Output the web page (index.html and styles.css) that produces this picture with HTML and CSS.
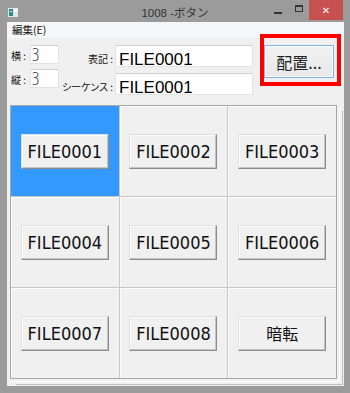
FILE: index.html
```html
<!DOCTYPE html>
<html lang="ja">
<head>
<meta charset="utf-8">
<title>1008 -ボタン</title>
<link rel="stylesheet" href="styles.css">
</head>
<body>
<div class="window">
  <div class="titlebar">
    <div class="app-icon">
      <svg width="10" height="9" viewBox="0 0 10 9"><rect x="0" y="0" width="10" height="9" fill="#dfe8e8"/><rect x="1" y="1" width="4" height="7" fill="#2f8c8c"/><rect x="2" y="3" width="2" height="1" fill="#e8f4f4"/><rect x="6" y="1" width="3" height="3" fill="#ffffff"/></svg>
    </div>
    <div class="title">1008 -ボタン</div>
    <div class="controls">
      <span class="min"></span>
      <span class="max"></span>
      <span class="close">✕</span>
    </div>
  </div>
  <div class="client">
    <div class="menubar"><span>編集(E)</span></div>
    <div class="top">
      <div class="dims">
        <div class="dim-row"><span class="lbl">横 :</span><div class="num">3</div></div>
        <div class="dim-row"><span class="lbl">縦 :</span><div class="num">3</div></div>
      </div>
      <div class="names">
        <span class="lbl lbl-r">表記 :</span><div class="txt">FILE0001</div>
        <span class="lbl lbl-r">シーケンス :</span><div class="txt">FILE0001</div>
      </div>
      <div class="highlight"><button class="place-btn">配置...</button></div>
    </div>
    <div class="grid">
      <div class="cell selected"><button class="cell-btn">FILE0001</button></div>
      <div class="cell"><button class="cell-btn">FILE0002</button></div>
      <div class="cell"><button class="cell-btn">FILE0003</button></div>
      <div class="cell"><button class="cell-btn">FILE0004</button></div>
      <div class="cell"><button class="cell-btn">FILE0005</button></div>
      <div class="cell"><button class="cell-btn">FILE0006</button></div>
      <div class="cell"><button class="cell-btn">FILE0007</button></div>
      <div class="cell"><button class="cell-btn">FILE0008</button></div>
      <div class="cell"><button class="cell-btn jp">暗転</button></div>
    </div>
  </div>
</div>
</body>
</html>
```
FILE: styles.css
```css
* { box-sizing: border-box; margin: 0; padding: 0; }
html, body { width: 350px; height: 393px; overflow: hidden; }
body { background: #9b9b9b; font-family: "Noto Sans CJK JP", sans-serif; }

.window { width: 350px; height: 393px; display: flex; flex-direction: column; }

.titlebar { height: 22px; flex: none; display: grid; grid-template-columns: 1fr auto 1fr; }
.app-icon { padding: 8px 0 0 8px; line-height: 0; }
.title { font-family: "Liberation Sans", "Noto Sans CJK JP", sans-serif; font-size: 11.5px; color: #333; padding-top: 4px; white-space: nowrap; }
.controls { display: flex; justify-content: flex-end; align-items: flex-start; }
.min { width: 8px; height: 2px; background: #333; margin-top: 12px; }
.max { width: 8px; height: 7px; border: 1px solid #333; border-top-width: 2px; margin: 5px 0 0 13px; }
.close { width: 34px; height: 20px; background: #c75050; margin: 0 7px 0 6px; color: #fff; font-family: "DejaVu Sans", sans-serif; font-size: 10px; font-weight: bold; display: flex; align-items: center; justify-content: center; }

.client { flex: 1; margin: 0 6px 7px 7px; background: #f0f0f0; display: flex; flex-direction: column; }

.menubar { height: 16px; flex: none; background: #f5f6f7; padding-left: 5px; font-size: 10.5px; line-height: 16px; color: #111; }

.top { height: 67px; flex: none; display: flex; align-items: flex-start; padding-top: 7px; }
.lbl { font-size: 10px; color: #111; line-height: 14px; white-space: nowrap; font-feature-settings: "palt"; }
.dims { margin-left: 4px; display: flex; flex-direction: column; gap: 5px; }
.dim-row { display: flex; align-items: flex-end; gap: 2px; }
.dim-row .lbl { width: 17px; padding-bottom: 1px; }
.num { width: 29px; height: 19px; background: #fff; border: 1px solid #e3e3e3; border-top-color: #d0d0d0; font-family: "Open Sans", sans-serif; font-weight: 300; font-stretch: condensed; font-size: 18px; line-height: 17px; padding-left: 1px; color: #444; }

.names { display: grid; grid-template-columns: 54px 138px; column-gap: 2px; row-gap: 6px; }
.lbl-r { text-align: right; align-self: end; padding-bottom: 1px; }
.txt { height: 22px; background: #fff; border: 1px solid #e3e3e3; border-top-color: #d0d0d0; font-family: "Liberation Sans", sans-serif; font-size: 17px; line-height: 17px; padding: 5px 0 0 3px; color: #000; }

.highlight { margin: -11px 0 0 7px; border: 4px solid #ff0000; padding: 7px 3px 4px 0; line-height: 0; }
.place-btn { width: 70px; height: 33px; background: linear-gradient(#f2f2f2, #e8e8e8); border: 1px solid #7eb4ea; box-shadow: inset 0 0 0 1px #fafafa; font-family: "Noto Sans CJK JP", sans-serif; font-size: 16px; color: #222; line-height: 20px; }

.grid { margin-left: 3px; width: 327px; height: 274px; border: 1px solid #a8a8a8; display: grid; grid-template-columns: repeat(3, 1fr); grid-template-rows: repeat(3, 1fr); gap: 1px; background: #c8c8c8; box-shadow: 2px 2px 0 #f0f0f0, 3px 3px 0 #ffffff, 5px 5px 0 #f0f0f0, 6px 6px 0 #c0c0c0; }
.cell { background: #f0f0f0; display: flex; align-items: center; justify-content: center; box-shadow: inset 1px 1px 0 #fbfbfb; }
.cell.selected { background: #3399ff; box-shadow: none; }
.cell-btn { width: 88px; height: 35px; background: #f0f0f0; border: 1px solid; border-color: #e0e0e0 #8c8c8c #8c8c8c #e0e0e0; box-shadow: inset -1px -1px 0 #c4c4c4, inset 1px 1px 0 #fcfcfc; font-family: "DejaVu Sans", sans-serif; font-stretch: condensed; font-size: 18px; color: #111; }
.cell-btn.jp { font-family: "Noto Sans CJK JP", sans-serif; font-size: 16px; }
```
